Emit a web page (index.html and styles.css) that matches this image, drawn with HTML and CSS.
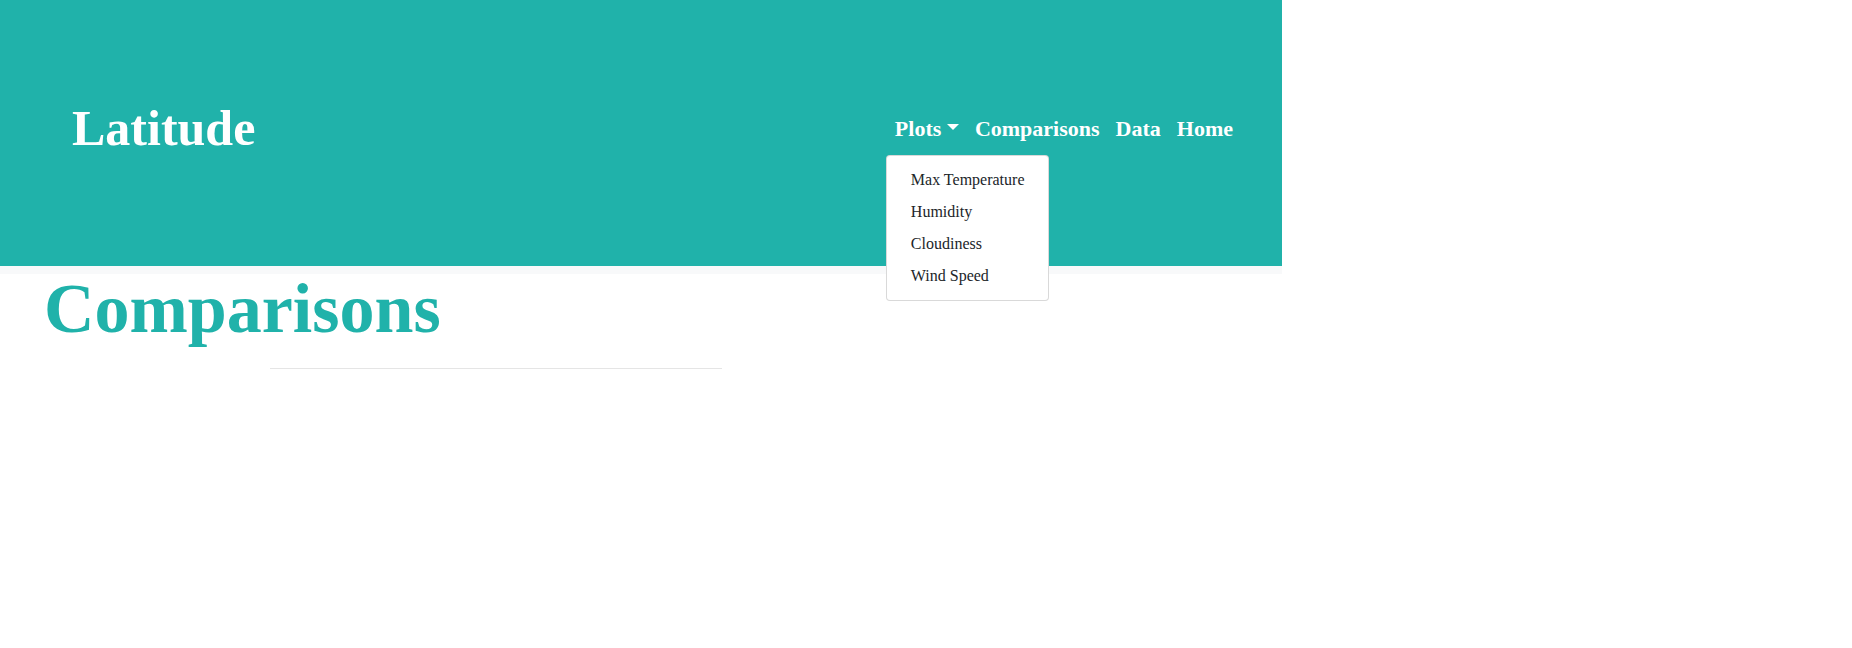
FILE: index.html
```html
<!DOCTYPE html>
<html lang="en">
<head>
<meta charset="utf-8">
<title>Comparisons</title>
<link rel="stylesheet" href="styles.css">
</head>
<body>
<div class="topbar">
  <header class="header">
    <a class="brand" href="#">Latitude</a>
    <nav class="nav">
      <div class="nav-item dropdown">
        <a class="nav-link" href="#">Plots<span class="caret"></span></a>
        <div class="dropdown-menu">
          <a class="dropdown-item" href="#">Max Temperature</a>
          <a class="dropdown-item" href="#">Humidity</a>
          <a class="dropdown-item" href="#">Cloudiness</a>
          <a class="dropdown-item" href="#">Wind Speed</a>
        </div>
      </div>
      <div class="nav-item"><a class="nav-link" href="#">Comparisons</a></div>
      <div class="nav-item"><a class="nav-link" href="#">Data</a></div>
      <div class="nav-item"><a class="nav-link" href="#">Home</a></div>
    </nav>
  </header>
</div>
<main class="main">
  <h1 class="page-title">Comparisons</h1>
  <hr class="divider">
</main>
</body>
</html>
```
FILE: styles.css
```css
html, body {
  margin: 0;
  padding: 0;
  background: #ffffff;
  font-family: "Liberation Serif", "Times New Roman", serif;
  color: #212529;
}

a {
  text-decoration: none;
}

.topbar {
  width: 1282px;
  background: #f8f9fa;
  padding-bottom: 8px;
  position: relative;
  z-index: 10;
}

.header {
  box-sizing: border-box;
  height: 266px;
  background: #20b2aa;
  display: flex;
  align-items: center;
  justify-content: space-between;
  padding: 0 41px 10px 72px;
}

.brand {
  color: #ffffff;
  font-weight: bold;
  font-size: 50px;
  line-height: 1;
}

.nav {
  display: flex;
  align-items: center;
}

.nav-item {
  position: relative;
}

.nav-link {
  display: block;
  color: #ffffff;
  font-weight: bold;
  font-size: 22px;
  line-height: 1.5;
  padding: 8px 8px;
}

.caret {
  display: inline-block;
  margin-left: 0.255em;
  vertical-align: 0.255em;
  border-top: 0.3em solid #ffffff;
  border-right: 0.3em solid transparent;
  border-left: 0.3em solid transparent;
  border-bottom: 0;
}

.dropdown-menu {
  position: absolute;
  top: 100%;
  left: -1px;
  margin-top: 2px;
  min-width: 160px;
  padding: 8px 0;
  background: #ffffff;
  border: 1px solid rgba(0, 0, 0, 0.15);
  border-radius: 4px;
}

.dropdown-item {
  display: block;
  padding: 4px 24px;
  font-size: 16px;
  line-height: 24px;
  color: #212529;
  white-space: nowrap;
}

.main {
  padding: 0;
}

.page-title {
  margin: 0;
  padding-left: 44px;
  color: #20b2aa;
  font-weight: bold;
  font-size: 70px;
  line-height: 1;
}

.divider {
  margin: 24px 0 0 270px;
  width: 452px;
  border: 0;
  border-top: 1px solid #e5e5e5;
  height: 0;
}
```
